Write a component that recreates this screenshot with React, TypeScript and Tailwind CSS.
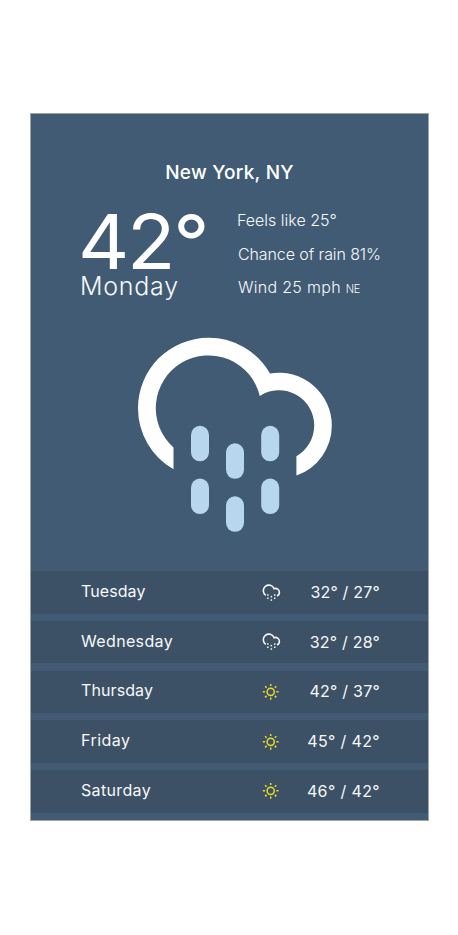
import React from "react";

type Kind = "snow" | "sun";

const forecast: { day: string; kind: Kind; temps: string; dayClass: string; tempClass: string }[] = [
  { day: "Tuesday", kind: "snow", temps: "32° / 27°", dayClass: "tracking-[0.08px]", tempClass: "tracking-[0.2px]" },
  { day: "Wednesday", kind: "snow", temps: "32° / 28°", dayClass: "tracking-[0.35px]", tempClass: "tracking-[0.2px]" },
  { day: "Thursday", kind: "sun", temps: "42° / 37°", dayClass: "tracking-[0.1px]", tempClass: "tracking-[0.25px]" },
  { day: "Friday", kind: "sun", temps: "45° / 42°", dayClass: "tracking-[0.45px]", tempClass: "tracking-[0.35px]" },
  { day: "Saturday", kind: "sun", temps: "46° / 42°", dayClass: "tracking-[0.35px]", tempClass: "tracking-[0.38px]" },
];

function RainCloud() {
  return (
    <svg className="ml-[107px] mt-[32px] block h-[196px] w-[196px] shrink-0" viewBox="138 337 196 196">
      <path
        fill="#fff"
        d="M173.5 469.2A70.3 70.3 0 0 1 138 408A70.3 70.3 0 0 1 208.3 337.8A70.3 70.3 0 0 1 270 373.5A52.8 52.8 0 0 1 331.8 425.5A52.8 52.8 0 0 1 296.4 475.6V456.2A35.2 35.2 0 0 0 314.2 425.6A35.2 35.2 0 0 0 259.8 396A52.7 52.7 0 1 0 173.5 447.5Z"
      />
      <g fill="#b8d7ee">
        <rect x="191" y="425.8" width="18" height="35.5" rx="9" />
        <rect x="226" y="443.3" width="18" height="35.5" rx="9" />
        <rect x="261.2" y="425.8" width="18" height="35.5" rx="9" />
        <rect x="191" y="478.6" width="18" height="35.5" rx="9" />
        <rect x="226" y="496.3" width="18" height="35.5" rx="9" />
        <rect x="261.2" y="478.6" width="18" height="35.5" rx="9" />
      </g>
    </svg>
  );
}

function SnowIcon() {
  return (
    <svg className="block h-5 w-5" viewBox="0 0 20 20" fill="none">
      <path
        d="M3.8 12.4A5.6 5.6 0 1 1 12.1 5.7A3.9 3.9 0 0 1 17.4 9.3A3.9 3.9 0 0 1 15 13"
        stroke="#f4f6f7"
        strokeWidth="1.6"
      />
      <g fill="#f4f6f7">
        <rect x="5.1" y="11.3" width="1.5" height="1.5" />
        <rect x="12" y="11.3" width="1.5" height="1.5" />
        <rect x="8.6" y="12.9" width="1.5" height="1.5" />
        <rect x="5.1" y="14.5" width="1.5" height="1.5" />
        <rect x="12" y="14.5" width="1.5" height="1.5" />
        <rect x="8.6" y="16.3" width="1.5" height="1.5" />
      </g>
    </svg>
  );
}

function SunIcon() {
  return (
    <svg className="block h-5 w-5" viewBox="0 0 20 20" fill="none" stroke="#e8dc26" strokeWidth="1.5">
      <circle cx="8.7" cy="9.8" r="3.6" />
      <path d="M8.7 1.9V4.1M8.7 15.5V17.7M.8 9.8H3M14.4 9.8H16.6M3.1 4.2L4.6 5.7M12.8 13.9L14.3 15.4M3.1 15.4L4.6 13.9M12.8 5.7L14.3 4.2" />
    </svg>
  );
}

export default function App() {
  return (
    <main className="h-[935px] w-[458px] bg-white pl-[30px] pt-[113px] font-['Inter','Liberation_Sans',sans-serif] text-[#f7f8f9]">
      <section className="flex h-[708px] w-[399px] flex-col overflow-hidden border border-[#a0a49f] bg-[#415b75]">
        <h1 className="mt-[46px] h-[26px] whitespace-nowrap text-center text-[19px] font-medium leading-[26px] text-white">
          <span className="inline-block tracking-[0.25px]">New York, NY</span>
        </h1>

        <div className="mt-[19px] flex h-[100px]">
          <div className="ml-[49px] w-[157px]">
            <div className="-ml-[2px] h-[66px] origin-left scale-x-[1.06] whitespace-nowrap text-[75px] font-normal leading-[74px] tracking-[-2.2px] text-white">
              42°
            </div>
            <div className="h-[30px] whitespace-nowrap text-[25px] font-light leading-[30px] tracking-[0.75px]">
              Monday
            </div>
          </div>
          <div className="flex flex-col whitespace-nowrap text-[16px] font-light leading-6">
            <div className="mt-[3px]">Feels like 25°</div>
            <div className="mt-[10px] pl-px tracking-[-0.1px]">Chance of rain 81%</div>
            <div className="mt-[9px] pl-px tracking-[0.3px]">
              Wind 25 mph <span className="text-[11px] tracking-[-0.2px]">NE</span>
            </div>
          </div>
        </div>

        <RainCloud />

        <ul className="mt-auto flex flex-col gap-[7.3px] pb-[7.5px]">
          {forecast.map((f) => (
            <li key={f.day} className="flex h-[42.4px] items-center bg-[#3c5165] pl-[50px] pr-[48px] text-[16px] leading-6">
              <span className={"w-[181px] whitespace-nowrap pb-[3px] " + f.dayClass}>{f.day}</span>
              {f.kind === "snow" ? <SnowIcon /> : <SunIcon />}
              <span className={"ml-auto whitespace-nowrap pb-px " + f.tempClass}>{f.temps}</span>
            </li>
          ))}
        </ul>
      </section>
    </main>
  );
}
